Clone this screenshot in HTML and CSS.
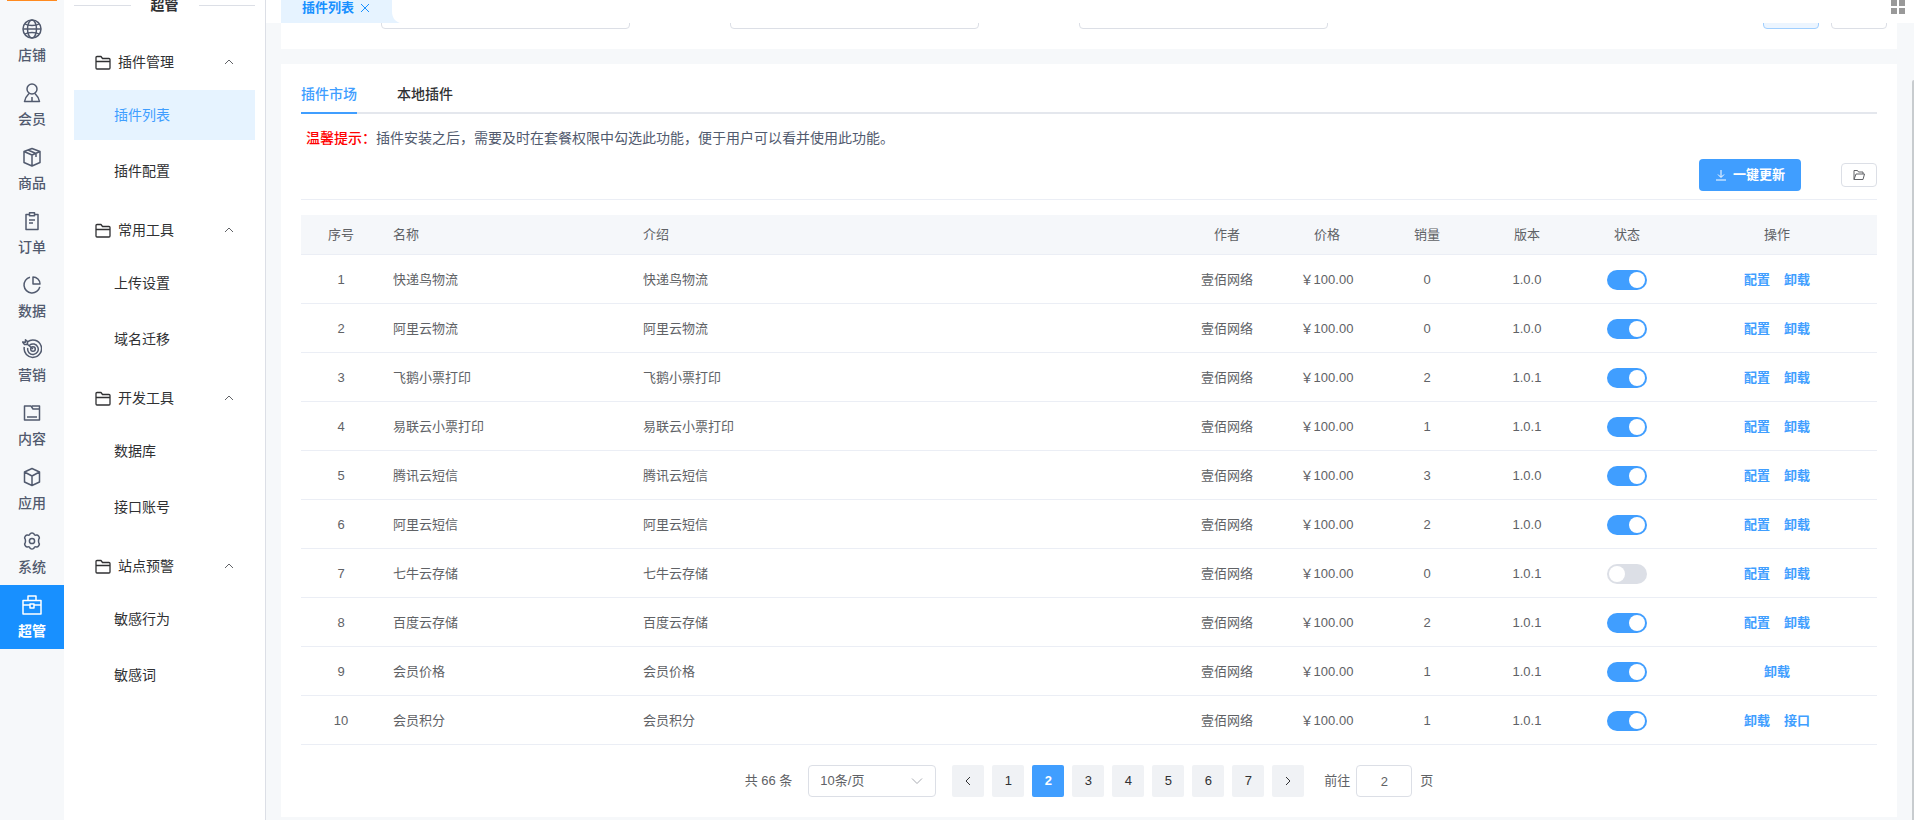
FILE: index.html
```html
<!DOCTYPE html>
<html lang="zh-CN">
<head>
    <meta charset="UTF-8">
    <title>插件列表</title>
    <link rel="stylesheet" href="styles.css">
</head>
<body>
    <svg class="sprite" aria-hidden="true">
        <symbol id="i-folder" viewBox="0 0 16 16"><path d="M1 14V3.500a1 1 0 0 1 1-1h4l1.500 2h6.500a1 1 0 0 1 1 1V14a1 1 0 0 1-1 1H2a1 1 0 0 1-1-1zM1 7.500h14"/></symbol>
        <symbol id="i-up" viewBox="0 0 10 10"><path d="M1 7l4-4 4 4"/></symbol>
    </svg>
    <div class="app">
        <nav class="rail">
            <div class="logo"></div>
            <a href="#"><svg viewBox="0 0 20 20"><circle cx="10" cy="10" r="9"/><ellipse cx="10" cy="10" rx="4.500" ry="9"/><path d="M3 5c3 2 11 2 14 0M3 15c3-2 11-2 14 0M1 10h18"/></svg><span>店铺</span></a>
            <a href="#"><svg viewBox="0 0 20 20"><circle cx="10" cy="6" r="5"/><path d="M7 10.500c-2 2-4 4.500-4.500 8h15c-.5-3.500-2.500-6-4.500-8M10 14v4"/></svg><span>会员</span></a>
            <a href="#"><svg viewBox="0 0 20 20"><path d="M10 1.500l8 3v11L10 19l-8-3.500v-11zM2 4.500L10 8l8-3.500M10 8v11M6 3l8 3.500v3.500"/></svg><span>商品</span></a>
            <a href="#"><svg viewBox="0 0 20 20"><path d="M7 3.500H4v15h12v-15h-3M7.500 1.800h5v3h-5zM7 9h6M7 12h4"/></svg><span>订单</span></a>
            <a href="#"><svg viewBox="0 0 20 20"><path d="M8 2.200a8 8 0 1 0 9.800 9.600M11 2v7h7a7 7 0 0 0-7-7z"/></svg><span>数据</span></a>
            <a href="#"><svg viewBox="0 0 20 20"><path d="M5.500 2.800A8.700 8.700 0 1 1 2.300 8M7.500 6.200A5.300 5.300 0 1 1 5.800 9M4.500 4.500L11 10M.5 3l2 2.500h3V2.500L3.500.8v2.500z"/><circle cx="11" cy="10" r="2.300"/></svg><span>营销</span></a>
            <a href="#"><svg viewBox="0 0 20 20"><path d="M2.500 17V3H9l2 3h6.500v11zM10 3h7.500v3M5 14h10"/></svg><span>内容</span></a>
            <a href="#"><svg viewBox="0 0 20 20"><path d="M10 1.500l7.500 3.500v10L10 18.500 2.500 15V5zM2.500 5L10 9l7.500-4M10 9v9.500"/></svg><span>应用</span></a>
            <a href="#"><svg viewBox="0 0 20 20"><path d="M8.300 2.500c1-.7 2.400-.7 3.400 0 .5 1.500 1.300 2 2.900 1.600 1.500-.2 2.700 1.700 2.800 3-1.200 1.400-1.200 4.400 0 5.800-.1 1.300-1.300 3.200-2.800 3-1.600-.4-2.400.1-2.900 1.600-1 .7-2.400.7-3.400 0-.5-1.500-1.300-2-2.900-1.600-1.500.2-2.700-1.700-2.800-3 1.200-1.400 1.200-4.400 0-5.800.1-1.300 1.300-3.200 2.800-3 1.600.4 2.400-.1 2.900-1.600z"/><circle cx="10" cy="10" r="2.600"/></svg><span>系统</span></a>
            <a href="#" class="active"><svg viewBox="0 0 20 20"><path d="M1 5.500h18V19H1zM6 5.500V1h8v4.500M1 10h7M12 10h7M8 9h4v4H8z"/></svg><span>超管</span></a>
        </nav>

        <aside class="menu">
            <div class="menu-title">超管</div>
            <button type="button" class="group"><svg class="folder"><use href="#i-folder"/></svg>插件管理<svg class="arrow"><use href="#i-up"/></svg></button>
            <a href="#" class="active">插件列表</a>
            <a href="#">插件配置</a>
            <button type="button" class="group"><svg class="folder"><use href="#i-folder"/></svg>常用工具<svg class="arrow"><use href="#i-up"/></svg></button>
            <a href="#">上传设置</a>
            <a href="#">域名迁移</a>
            <button type="button" class="group"><svg class="folder"><use href="#i-folder"/></svg>开发工具<svg class="arrow"><use href="#i-up"/></svg></button>
            <a href="#">数据库</a>
            <a href="#">接口账号</a>
            <button type="button" class="group"><svg class="folder"><use href="#i-folder"/></svg>站点预警<svg class="arrow"><use href="#i-up"/></svg></button>
            <a href="#">敏感行为</a>
            <a href="#">敏感词</a>
        </aside>

        <main class="main">
            <div class="tags">
                <div class="tag">
                    <a href="#">插件列表</a>
                    <button type="button" aria-label="关闭"><svg viewBox="0 0 10 10"><path d="M1 1l8 8M9 1l-8 8"/></svg></button>
                </div>
                <svg class="flare" viewBox="0 0 8 12"><path d="M0 0c0 7 3 10 8 12H0z"/></svg>
                <button type="button" class="grid-btn" aria-label="更多"><svg viewBox="0 0 14 14"><path d="M0 0h6v6H0zM8 0h6v6H8zM0 8h6v6H0zM8 8h6v6H8z"/></svg></button>
            </div>

            <div class="scroll">
                <form class="card search">
                    <input type="text" aria-label="名称">
                    <input type="text" aria-label="作者">
                    <input type="text" aria-label="状态">
                    <div class="search-btns">
                        <button type="button" class="query" aria-label="查询"></button>
                        <button type="button" aria-label="重置"></button>
                    </div>
                </form>

                <section class="card">
                    <div class="tabs">
                        <a href="#" class="active">插件市场</a>
                        <a href="#">本地插件</a>
                    </div>
                    <p class="tip"><strong>温馨提示：</strong>插件安装之后，需要及时在套餐权限中勾选此功能，便于用户可以看并使用此功能。</p>
                    <div class="toolbar">
                        <button type="button" class="update"><svg viewBox="0 0 12 12"><path d="M6 1v7M3 5.500l3 3 3-3M1 11h10"/></svg>一键更新</button>
                        <button type="button" class="open" aria-label="打开文件夹"><svg viewBox="0 0 12 12"><path d="M1 10.500V1.500h3.500l1 1.500H10v2M1 10.500l2-5.500h8.500l-1.500 5.500z"/></svg></button>
                    </div>

                    <table>
                        <colgroup>
                            <col class="c-no"><col class="c-name"><col><col class="c-sm"><col class="c-sm"><col class="c-sm"><col class="c-sm"><col class="c-sm"><col class="c-op">
                        </colgroup>
                        <thead>
                            <tr><th>序号</th><th class="left">名称</th><th class="left">介绍</th><th>作者</th><th>价格</th><th>销量</th><th>版本</th><th>状态</th><th>操作</th></tr>
                        </thead>
                        <tbody>
                            <tr><td>1</td><td class="left">快递鸟物流</td><td class="left">快递鸟物流</td><td>壹佰网络</td><td>￥100.00</td><td>0</td><td>1.0.0</td><td><input type="checkbox" class="switch" aria-label="状态" checked></td><td><a href="#">配置</a><a href="#">卸载</a></td></tr>
                            <tr><td>2</td><td class="left">阿里云物流</td><td class="left">阿里云物流</td><td>壹佰网络</td><td>￥100.00</td><td>0</td><td>1.0.0</td><td><input type="checkbox" class="switch" aria-label="状态" checked></td><td><a href="#">配置</a><a href="#">卸载</a></td></tr>
                            <tr><td>3</td><td class="left">飞鹅小票打印</td><td class="left">飞鹅小票打印</td><td>壹佰网络</td><td>￥100.00</td><td>2</td><td>1.0.1</td><td><input type="checkbox" class="switch" aria-label="状态" checked></td><td><a href="#">配置</a><a href="#">卸载</a></td></tr>
                            <tr><td>4</td><td class="left">易联云小票打印</td><td class="left">易联云小票打印</td><td>壹佰网络</td><td>￥100.00</td><td>1</td><td>1.0.1</td><td><input type="checkbox" class="switch" aria-label="状态" checked></td><td><a href="#">配置</a><a href="#">卸载</a></td></tr>
                            <tr><td>5</td><td class="left">腾讯云短信</td><td class="left">腾讯云短信</td><td>壹佰网络</td><td>￥100.00</td><td>3</td><td>1.0.0</td><td><input type="checkbox" class="switch" aria-label="状态" checked></td><td><a href="#">配置</a><a href="#">卸载</a></td></tr>
                            <tr><td>6</td><td class="left">阿里云短信</td><td class="left">阿里云短信</td><td>壹佰网络</td><td>￥100.00</td><td>2</td><td>1.0.0</td><td><input type="checkbox" class="switch" aria-label="状态" checked></td><td><a href="#">配置</a><a href="#">卸载</a></td></tr>
                            <tr><td>7</td><td class="left">七牛云存储</td><td class="left">七牛云存储</td><td>壹佰网络</td><td>￥100.00</td><td>0</td><td>1.0.1</td><td><input type="checkbox" class="switch" aria-label="状态"></td><td><a href="#">配置</a><a href="#">卸载</a></td></tr>
                            <tr><td>8</td><td class="left">百度云存储</td><td class="left">百度云存储</td><td>壹佰网络</td><td>￥100.00</td><td>2</td><td>1.0.1</td><td><input type="checkbox" class="switch" aria-label="状态" checked></td><td><a href="#">配置</a><a href="#">卸载</a></td></tr>
                            <tr><td>9</td><td class="left">会员价格</td><td class="left">会员价格</td><td>壹佰网络</td><td>￥100.00</td><td>1</td><td>1.0.1</td><td><input type="checkbox" class="switch" aria-label="状态" checked></td><td><a href="#">卸载</a></td></tr>
                            <tr><td>10</td><td class="left">会员积分</td><td class="left">会员积分</td><td>壹佰网络</td><td>￥100.00</td><td>1</td><td>1.0.1</td><td><input type="checkbox" class="switch" aria-label="状态" checked></td><td><a href="#">卸载</a><a href="#">接口</a></td></tr>
                        </tbody>
                    </table>

                    <div class="pager">
                        <span class="total">共 66 条</span>
                        <div class="size">
                            <select aria-label="每页条数"><option>10条/页</option></select>
                            <svg viewBox="0 0 12 12"><path d="M1 3.500l5 5 5-5"/></svg>
                        </div>
                        <div class="pages">
                            <button type="button" aria-label="上一页"><svg viewBox="0 0 10 10"><path d="M7 1L3 5l4 4"/></svg></button>
                            <button type="button">1</button>
                            <button type="button" class="active">2</button>
                            <button type="button">3</button>
                            <button type="button">4</button>
                            <button type="button">5</button>
                            <button type="button">6</button>
                            <button type="button">7</button>
                            <button type="button" aria-label="下一页"><svg viewBox="0 0 10 10"><path d="M3 1l4 4-4 4"/></svg></button>
                        </div>
                        <label class="jump">前往<input type="text" value="2">页</label>
                    </div>
                </section>
                <div class="thumb"></div>
            </div>
        </main>
    </div>
</body>
</html>
```
FILE: styles.css
```css
* {
    box-sizing: border-box;
}
body {
    margin: 0;
    font-family: "Liberation Sans", "Noto Sans CJK SC", sans-serif;
    font-size: 14px;
    color: #606266;
    background: #f6f8fa;
}
a {
    color: inherit;
    text-decoration: none;
}
button, input, select {
    font: inherit;
    color: inherit;
    margin: 0;
    padding: 0;
}
button {
    border: 0;
    background: none;
}
svg {
    fill: none;
    stroke: currentColor;
    stroke-linejoin: round;
    flex: none;
}
.sprite {
    display: none;
}
.app {
    display: flex;
    height: 100vh;
    overflow: hidden;
}

/* first level */
.rail {
    width: 64px;
    flex: none;
    color: #515a6e;
    background: #f6f8fa;
}
.logo {
    height: 1px;
    margin: 0 7px 8px;
    background: #ff8a1f;
}
.rail a {
    display: flex;
    flex-direction: column;
    align-items: center;
    gap: 6px;
    height: 64px;
    padding-top: 10px;
    line-height: 20px;
    font-weight: 500;
}
.rail svg {
    width: 20px;
    height: 20px;
    stroke-width: 1.5;
}
.rail .active {
    background: #1890ff;
    color: #fff;
    font-weight: 700;
}

/* second level */
.menu {
    width: 202px;
    flex: none;
    padding: 0 10px;
    background: #fff;
    border-right: 1px solid #dcdfe6;
    color: #303133;
}
.menu-title {
    display: flex;
    align-items: center;
    gap: 20px;
    height: 20px;
    margin: -5px 0 19px;
    line-height: 20px;
    font-weight: 700;
}
.menu-title::before, .menu-title::after {
    content: "";
    flex: 1;
    height: 1px;
    background: #dcdfe6;
}
.group {
    display: flex;
    align-items: center;
    width: 100%;
    height: 56px;
    padding: 0 21px;
    line-height: 20px;
}
.folder {
    width: 16px;
    height: 16px;
    margin-right: 7px;
    stroke-width: 1.3;
}
.arrow {
    width: 10px;
    height: 10px;
    margin-left: auto;
    color: #606266;
}
.menu a {
    display: block;
    height: 50px;
    margin-bottom: 6px;
    padding-left: 40px;
    line-height: 50px;
}
.menu a.active {
    background: #e6f3ff;
    color: #409eff;
}

/* opened pages */
.main {
    flex: 1;
    min-width: 0;
    display: flex;
    flex-direction: column;
}
.tags {
    display: flex;
    flex: none;
    align-items: flex-end;
    height: 23px;
    padding: 0 9px 0 15px;
    background: #fff;
}
.tag {
    display: flex;
    align-items: center;
    gap: 6px;
    height: 30px;
    padding: 0 22px 0 21px;
    background: #e6f3ff;
    color: #1890ff;
    font-size: 13px;
    line-height: 20px;
    font-weight: 700;
}
.tag button {
    display: flex;
}
.tag svg {
    width: 10px;
    height: 10px;
}
.flare {
    width: 8px;
    height: 12px;
    fill: #e6f3ff;
    stroke: none;
}
.grid-btn {
    display: flex;
    height: 23px;
    margin-left: auto;
    color: #999;
}
.grid-btn svg {
    width: 14px;
    height: 14px;
    fill: currentColor;
    stroke: none;
}

.scroll {
    position: relative;
    flex: 1;
    padding: 0 17px 0 15px;
    overflow: hidden;
}
.thumb {
    position: absolute;
    top: 57px;
    right: 0;
    bottom: 0;
    width: 2px;
    background: #c8cccf;
    border-radius: 2px 0 0 0;
}
.card {
    background: #fff;
    margin-bottom: 15px;
    padding: 10px 20px 20px;
}
.search {
    display: flex;
    gap: 100px;
    margin-top: -26px;
    padding: 0 10px 20px 100px;
}
.search input, .search button {
    height: 32px;
    border: 1px solid #dcdfe6;
    border-radius: 4px;
    background: #fff;
}
.search input {
    width: 249px;
}
.search-btns {
    display: flex;
    gap: 12px;
    margin-left: auto;
}
.search button {
    width: 56px;
}
.search .query {
    border-color: #a0cfff;
    background: #ecf5ff;
}

.tabs {
    display: flex;
    gap: 40px;
    height: 40px;
    line-height: 40px;
    color: #303133;
    font-weight: 500;
    box-shadow: inset 0 -2px #e4e7ed;
}
.tabs .active {
    color: #409eff;
    border-bottom: 2px solid #409eff;
}
.tip {
    margin: 14px 5px 10px;
    line-height: 21px;
    color: #515a6e;
}
.tip strong {
    color: #f00;
    font-weight: 500;
}
.toolbar {
    display: flex;
    align-items: center;
    justify-content: flex-end;
    gap: 40px;
    padding-bottom: 8px;
    margin-bottom: 15px;
    border-bottom: 1px solid #ebeef5;
}
.update {
    display: flex;
    align-items: center;
    justify-content: center;
    gap: 6px;
    width: 102px;
    height: 32px;
    border-radius: 4px;
    background: #409eff;
    color: #fff;
    font-size: 13px;
    line-height: 20px;
    font-weight: 700;
}
.update svg {
    width: 12px;
    height: 12px;
}
.open {
    display: flex;
    align-items: center;
    justify-content: center;
    width: 36px;
    height: 24px;
    border: 1px solid #dcdfe6;
    border-radius: 4px;
}
.open svg {
    width: 12px;
    height: 12px;
}

table {
    width: 100%;
    table-layout: fixed;
    border-collapse: separate;
    border-spacing: 0;
    font-size: 13px;
}
.c-no { width: 80px; }
.c-name { width: 250px; }
.c-sm { width: 100px; }
.c-op { width: 200px; }
th, td {
    height: 49px;
    padding: 1px 12px 0;
    border-bottom: 1px solid #ebeef5;
    line-height: 20px;
    text-align: center;
    font-weight: 400;
}
th {
    height: 40px;
    padding-top: 0;
    background: #f5f7fa;
}
.left {
    text-align: left;
}
td a {
    color: #409eff;
    font-weight: 600;
}
td a + a {
    margin-left: 14px;
}
.switch {
    appearance: none;
    display: block;
    width: 40px;
    height: 20px;
    margin: 0 auto;
    border-radius: 10px;
    background: #dcdfe6;
}
.switch::before {
    content: "";
    display: block;
    width: 16px;
    height: 16px;
    margin: 2px;
    border-radius: 50%;
    background: #fff;
}
.switch:checked {
    background: #409eff;
}
.switch:checked::before {
    margin-left: 22px;
}

.pager {
    display: flex;
    justify-content: center;
    align-items: center;
    gap: 16px;
    margin-top: 20px;
    font-size: 13px;
    line-height: 20px;
}
.size {
    display: grid;
    align-items: center;
    width: 128px;
}
.size select, .size svg {
    grid-area: 1 / 1;
}
.size select, .jump input {
    height: 32px;
    border: 1px solid #dcdfe6;
    border-radius: 4px;
    background: #fff;
}
.size select {
    appearance: none;
    padding: 0 11px;
}
.size svg {
    width: 12px;
    height: 12px;
    margin-right: 13px;
    justify-self: end;
    color: #a8abb2;
    pointer-events: none;
}
.pages {
    display: flex;
    gap: 8px;
}
.pages button {
    display: flex;
    align-items: center;
    justify-content: center;
    width: 32px;
    height: 32px;
    border-radius: 2px;
    background: #f0f2f5;
    color: #303133;
}
.pages .active {
    background: #409eff;
    color: #fff;
    font-weight: 700;
}
.pages svg {
    width: 10px;
    height: 10px;
}
.jump {
    display: flex;
    align-items: center;
    margin-left: 4px;
}
.jump input {
    width: 56px;
    margin: 0 8px 0 6px;
    text-align: center;
}
```
